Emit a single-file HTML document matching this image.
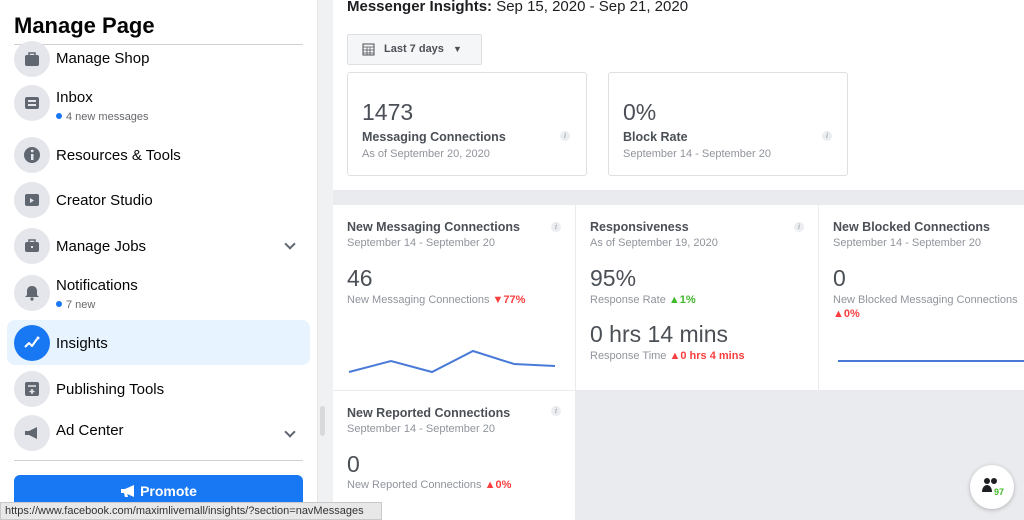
<!DOCTYPE html>
<html><head><meta charset="utf-8"><style>
*{box-sizing:border-box;margin:0;padding:0}
body{width:1024px;height:520px;overflow:hidden;background:#e9ebee;font-family:"Liberation Sans",sans-serif;position:relative}
.sb{position:absolute;left:0;top:0;width:317px;height:520px;background:#fff}
.scroll{position:absolute;left:317px;top:0;width:16px;height:520px;background:#f0f1f3;border-left:1px solid #e4e5e7}
.scroll div{position:absolute;left:2px;top:406px;width:5px;height:30px;border-radius:3px;background:#d8d9db}
h1{position:absolute;left:14px;top:13px;font-size:22px;font-weight:bold;color:#050505}
.hr{position:absolute;left:14px;width:289px;height:1px;background:#ced0d4}
.it{position:absolute;left:14px;width:290px;height:36px}
.ic{position:absolute;left:0;top:0;width:36px;height:36px;border-radius:50%;background:#e4e6eb}
.ic svg{position:absolute;left:9px;top:9px}
.lb{position:absolute;left:42px;font-size:15px;color:#050505}
.sub{position:absolute;left:42px;font-size:11px;color:#65676b}
.sub:before{content:"";display:inline-block;width:6px;height:6px;border-radius:50%;background:#1877f2;margin-right:4px;vertical-align:1px}
.chev{position:absolute;right:10px;top:12px;width:8px;height:8px;border-right:2px solid #606770;border-bottom:2px solid #606770;transform:rotate(45deg)}
.hl{position:absolute;left:7px;top:320px;width:303px;height:45px;background:#e7f3ff;border-radius:8px}
.btn{position:absolute;left:14px;top:475px;width:289px;height:32px;background:#1877f2;border-radius:6px;color:#fff;font-size:14px;font-weight:bold;text-align:center;line-height:32px}
.status{position:absolute;left:0;top:502px;width:382px;height:18px;background:#e8e8e8;border:1px solid #c9c9c9;font-size:11px;color:#333;line-height:16px;padding-left:4px}
.top{position:absolute;left:333px;top:0;width:691px;height:190px;background:#fff}
.t{position:absolute;color:#1c1e21}
.box{position:absolute;top:72px;width:240px;height:104px;border:1px solid #dddfe2;border-radius:3px;background:#fff}
.info{position:absolute;width:10px;height:10px;border-radius:50%;background:#ebedf0;color:#8d949e;font-size:8px;font-style:italic;text-align:center;line-height:10px;font-family:"Liberation Serif",serif}
.card{position:absolute;background:#fff}
.ct{position:absolute;left:14px;top:15px;font-size:12.5px;font-weight:bold;color:#4b4f56}
.cd{position:absolute;left:14px;top:32px;font-size:11px;color:#90949c}
.big{position:absolute;left:14px;font-size:23px;color:#4b4f56}
.sm{position:absolute;left:14px;font-size:11px;color:#90949c}
.r{color:#fa3e3e;font-weight:bold}.g{color:#42b72a;font-weight:bold}
</style></head><body>
<div class="sb">
<h1>Manage Page</h1>
<div class="hr" style="top:44px"></div>
<div class="hl"></div>
<div class="it" style="top:41px"><div class="ic"><svg width="18" height="18"><rect x="2" y="5" width="14" height="11" rx="2" fill="#606770"/><path d="M6 5V3h6v2" stroke="#606770" stroke-width="1.5" fill="none"/></svg></div><div class="lb" style="top:9px">Manage Shop</div></div>
<div class="it" style="top:85px"><div class="ic"><svg width="18" height="18"><rect x="2" y="3" width="14" height="12" rx="2" fill="#606770"/><rect x="5" y="6" width="8" height="2" fill="#e4e6eb"/><rect x="5" y="10" width="8" height="2" fill="#e4e6eb"/></svg></div><div class="lb" style="top:4px">Inbox</div><div class="sub" style="top:26px">4 new messages</div></div>
<div class="it" style="top:137px"><div class="ic"><svg width="18" height="18"><circle cx="9" cy="9" r="8" fill="#606770"/><rect x="8" y="8" width="2.5" height="6" fill="#e4e6eb"/><circle cx="9.2" cy="5" r="1.4" fill="#e4e6eb"/></svg></div><div class="lb" style="top:10px">Resources &amp; Tools</div></div>
<div class="it" style="top:182px"><div class="ic"><svg width="18" height="18"><rect x="2" y="3" width="14" height="12" rx="2" fill="#606770"/><path d="M7 7l4 2.5-4 2.5z" fill="#e4e6eb"/></svg></div><div class="lb" style="top:10px">Creator Studio</div></div>
<div class="it" style="top:228px"><div class="ic"><svg width="18" height="18"><rect x="2" y="5" width="14" height="10" rx="2" fill="#606770"/><path d="M6 5V3h6v2" stroke="#606770" stroke-width="1.5" fill="none"/><rect x="8" y="9" width="2" height="2" fill="#e4e6eb"/></svg></div><div class="lb" style="top:10px">Manage Jobs</div><div class="chev"></div></div>
<div class="it" style="top:275px"><div class="ic"><svg width="18" height="18"><path d="M9 2c-3 0-5 2-5 5v4l-2 2h14l-2-2V7c0-3-2-5-5-5z" fill="#606770"/><circle cx="9" cy="15" r="1.6" fill="#606770"/></svg></div><div class="lb" style="top:2px">Notifications</div><div class="sub" style="top:24px">7 new</div></div>
<div class="it" style="top:325px"><div class="ic" style="background:#1877f2"><svg width="18" height="18"><path d="M2 13l4-4 3 3 5-7" stroke="#fff" stroke-width="2" fill="none" stroke-linejoin="round"/><circle cx="15" cy="4" r="1.5" fill="#fff"/></svg></div><div class="lb" style="top:10px">Insights</div></div>
<div class="it" style="top:371px"><div class="ic"><svg width="18" height="18"><rect x="2" y="2" width="14" height="14" rx="2" fill="#606770"/><path d="M5 6h8M9 9v5M6.5 11.5h5" stroke="#e4e6eb" stroke-width="1.6"/></svg></div><div class="lb" style="top:10px">Publishing Tools</div></div>
<div class="it" style="top:415px"><div class="ic"><svg width="18" height="18"><path d="M2 7h4l8-4v12l-8-4H2z" fill="#606770"/></svg></div><div class="lb" style="top:7px">Ad Center</div><div class="chev" style="top:13px"></div></div>
<div class="hr" style="top:460px"></div>
<div class="btn"><svg width="16" height="14" style="vertical-align:-2px;margin-right:4px"><path d="M1 5h4l9-4v12l-9-4H1z M4 9h3l1 4H5z" fill="#fff"/></svg>Promote</div>
</div>
<div class="scroll"><div></div></div>
<div class="top">
<div class="t" style="left:14px;top:-2px;font-size:15px"><b>Messenger Insights:</b> Sep 15, 2020 - Sep 21, 2020</div>
<div style="position:absolute;left:14px;top:34px;width:135px;height:31px;background:#f5f6f7;border:1px solid #dddfe2;border-radius:2px;font-size:11px;font-weight:bold;color:#4b4f56;line-height:29px;padding-left:36px">Last 7 days <span style="margin-left:6px;font-size:9px">▼</span>
<svg style="position:absolute;left:14px;top:8px" width="13" height="13"><rect x="1" y="1" width="11" height="11" fill="none" stroke="#4b4f56"/><path d="M1 4h11M1 7h11M1 10h11M5 4v8M8 4v8" stroke="#4b4f56" stroke-width=".7"/></svg></div>
<div class="box" style="left:14px"><div class="t" style="left:14px;top:26px;font-size:23px;color:#4b4f56">1473</div><div class="t" style="left:14px;top:57px;font-size:12.5px;font-weight:bold;color:#4b4f56">Messaging Connections</div><div class="t" style="left:14px;top:75px;font-size:11px;color:#90949c">As of September 20, 2020</div><div class="info" style="left:212px;top:58px">i</div></div>
<div class="box" style="left:275px"><div class="t" style="left:14px;top:26px;font-size:23px;color:#4b4f56">0%</div><div class="t" style="left:14px;top:57px;font-size:12.5px;font-weight:bold;color:#4b4f56">Block Rate</div><div class="t" style="left:14px;top:75px;font-size:11px;color:#90949c">September 14 - September 20</div><div class="info" style="left:213px;top:58px">i</div></div>
</div>
<div class="card" style="left:333px;top:205px;width:242px;height:185px"><div class="ct">New Messaging Connections</div><div class="cd">September 14 - September 20</div><div class="info" style="left:218px;top:17px">i</div><div class="big" style="top:60px">46</div><div class="sm" style="top:89px">New Messaging Connections <span class="r">▼77%</span></div>
<svg style="position:absolute;left:0;top:130px" width="242" height="50"><polyline points="16,37 58,26 99,37 140,16 181,29 222,31" fill="none" stroke="#4a7ad8" stroke-width="2"/></svg></div>
<div class="card" style="left:576px;top:205px;width:242px;height:185px"><div class="ct">Responsiveness</div><div class="cd">As of September 19, 2020</div><div class="info" style="left:218px;top:17px">i</div><div class="big" style="top:60px">95%</div><div class="sm" style="top:89px">Response Rate <span class="g">▲1%</span></div><div class="big" style="top:116px">0 hrs 14 mins</div><div class="sm" style="top:145px">Response Time <span class="r">▲0 hrs 4 mins</span></div></div>
<div class="card" style="left:819px;top:205px;width:205px;height:185px"><div class="ct">New Blocked Connections</div><div class="cd">September 14 - September 20</div><div class="big" style="top:60px">0</div><div class="sm" style="top:89px;white-space:nowrap">New Blocked Messaging Connections</div><div class="sm" style="top:103px"><span class="r">▲0%</span></div><div style="position:absolute;left:19px;top:155px;width:190px;height:2px;background:#4a7ad8"></div></div>
<div class="card" style="left:333px;top:391px;width:242px;height:129px"><div class="ct">New Reported Connections</div><div class="cd">September 14 - September 20</div><div class="info" style="left:218px;top:15px">i</div><div class="big" style="top:60px">0</div><div class="sm" style="top:88px">New Reported Connections <span class="r">▲0%</span></div></div>
<div style="position:absolute;left:970px;top:465px;width:44px;height:44px;border-radius:50%;background:#fff;box-shadow:0 1px 4px rgba(0,0,0,.25)"><svg style="position:absolute;left:11px;top:11px" width="22" height="22"><circle cx="6" cy="5" r="3" fill="#1c1e21"/><circle cx="13" cy="5" r="3" fill="#1c1e21"/><path d="M1 16c0-5 3-7 5-7s5 2 5 7z" fill="#1c1e21"/></svg><span style="position:absolute;left:24px;top:22px;font-size:9px;color:#42b72a;font-weight:bold">97</span></div>
<div class="status">https://www.facebook.com/maximlivemall/insights/?section=navMessages</div>
</body></html>
